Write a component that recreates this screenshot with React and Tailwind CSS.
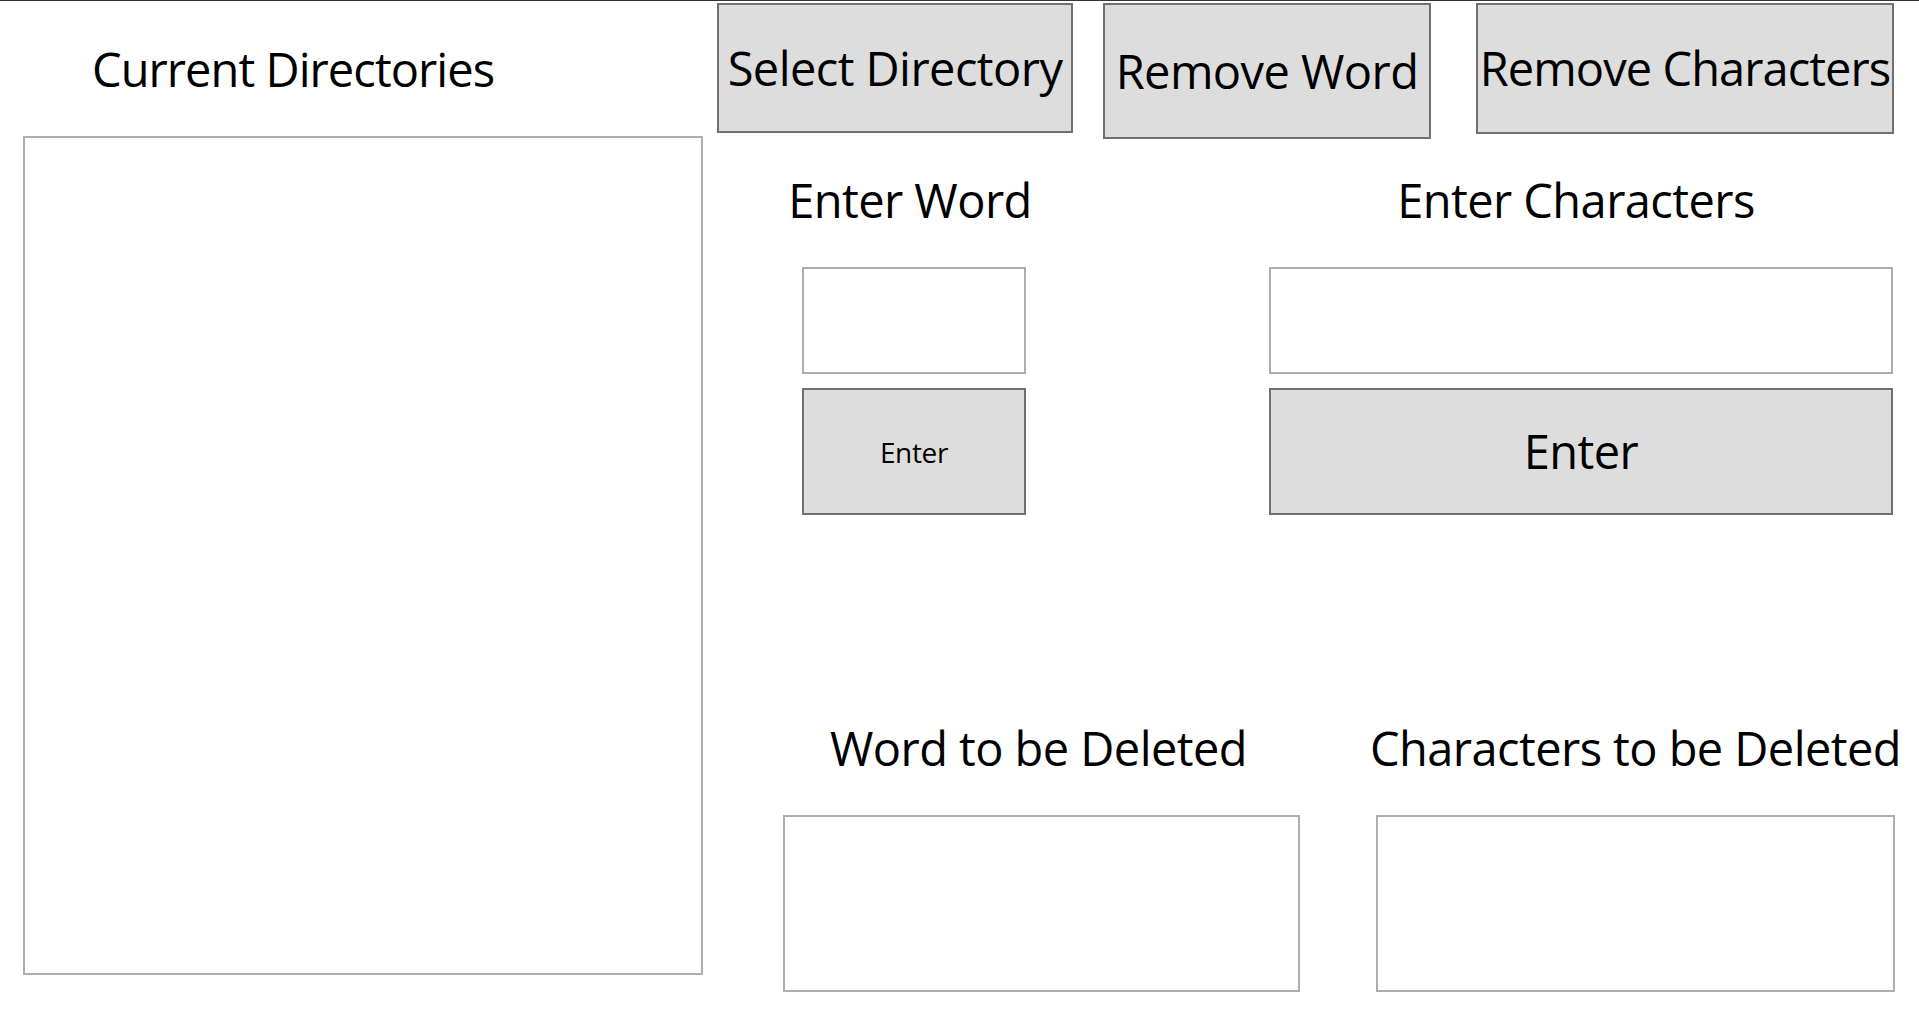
export default function App() {
  const font = { fontFamily: '"Open Sans", "Noto Sans", sans-serif' }

  return (
    <div
      className="w-[1919px] h-[1018px] bg-white border-t border-[#333333] flex text-black overflow-hidden"
      style={font}
    >
      {/* Left: directory list */}
      <div className="ml-[23px] w-[680px] flex flex-col">
        <div className="mt-[45px] pl-[69px] text-[47px] leading-none tracking-[-0.02em] whitespace-nowrap">
          Current Directories
        </div>
        <div className="mt-[43px] h-[839px] border-2 border-[#adadad] bg-white" />
      </div>

      {/* Right: actions */}
      <div className="ml-[14px] flex flex-col">
        {/* Top buttons */}
        <div className="mt-[2px] flex items-start">
          <button className="w-[356px] h-[130px] bg-[#dddddd] border-2 border-[#707070] text-[47px] leading-none tracking-[-0.012em] whitespace-nowrap flex items-center justify-center">
            Select Directory
          </button>
          <button className="ml-[30px] w-[328px] h-[136px] bg-[#dddddd] border-2 border-[#707070] text-[47px] leading-none tracking-[-0.012em] whitespace-nowrap flex items-center justify-center">
            Remove Word
          </button>
          <button className="ml-[45px] w-[418px] h-[131px] bg-[#dddddd] border-2 border-[#707070] text-[47px] leading-none tracking-[-0.02em] whitespace-nowrap flex items-center justify-center">
            Remove Characters
          </button>
        </div>

        {/* Entry row */}
        <div className="mt-[38px] flex items-start">
          <div className="ml-[85px] w-[224px] flex flex-col">
            <div className="flex justify-center pr-[8px] text-[47px] leading-none tracking-[-0.012em] whitespace-nowrap">
              Enter Word
            </div>
            <input className="mt-[43px] h-[107px] border-2 border-[#adadad] bg-white outline-none px-2 text-[28px]" />
            <button className="mt-[14px] h-[127px] bg-[#dddddd] border-2 border-[#707070] text-[28px] leading-none tracking-[-0.012em] flex items-center justify-center">
              Enter
            </button>
          </div>
          <div className="ml-[243px] w-[624px] flex flex-col">
            <div className="flex justify-center pr-[10px] text-[47px] leading-none tracking-[-0.012em] whitespace-nowrap">
              Enter Characters
            </div>
            <input className="mt-[43px] h-[107px] border-2 border-[#adadad] bg-white outline-none px-2 text-[28px]" />
            <button className="mt-[14px] h-[127px] bg-[#dddddd] border-2 border-[#707070] text-[47px] leading-none tracking-[-0.012em] flex items-center justify-center">
              Enter
            </button>
          </div>
        </div>

        {/* Pending deletions */}
        <div className="mt-[210px] flex items-start">
          <div className="ml-[66px] w-[517px] flex flex-col">
            <div className="flex justify-center pr-[6px] text-[47px] leading-none tracking-[-0.012em] whitespace-nowrap">
              Word to be Deleted
            </div>
            <div className="mt-[43px] h-[177px] border-2 border-[#adadad] bg-white" />
          </div>
          <div className="ml-[76px] w-[519px] flex flex-col">
            <div className="flex justify-center text-[47px] leading-none tracking-[-0.012em] whitespace-nowrap">
              Characters to be Deleted
            </div>
            <div className="mt-[43px] h-[177px] border-2 border-[#adadad] bg-white" />
          </div>
        </div>
      </div>
    </div>
  )
}
